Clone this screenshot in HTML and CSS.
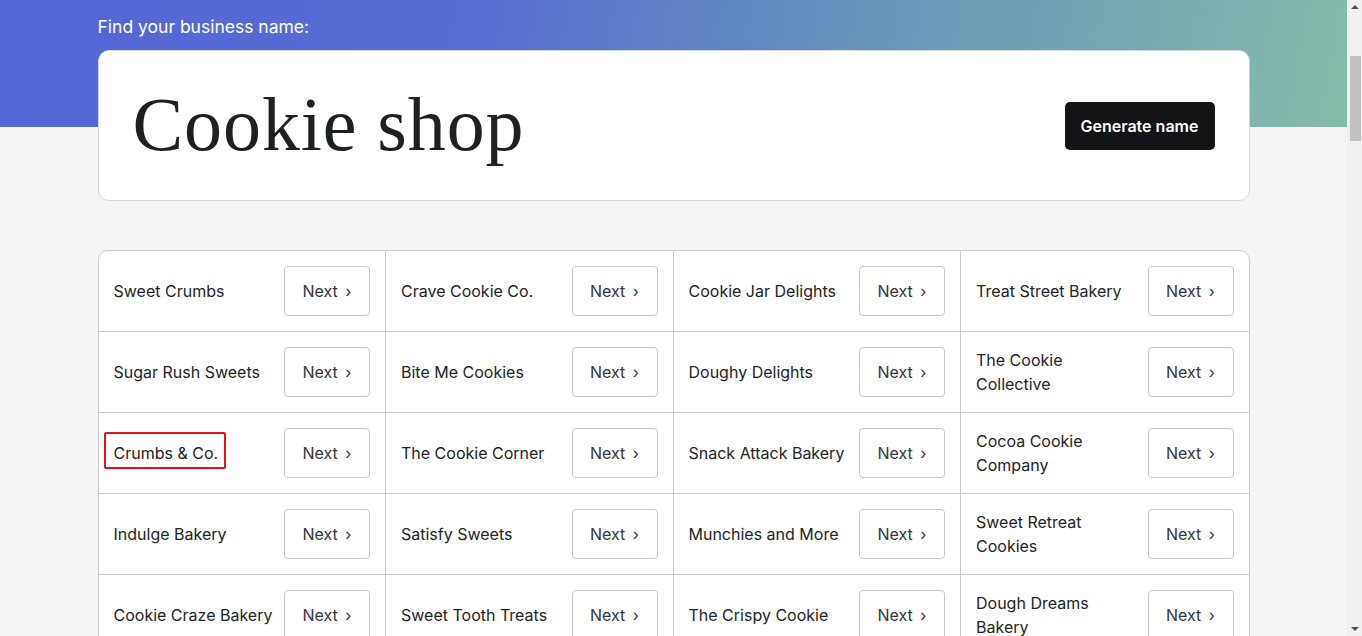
FILE: index.html
```html
<!DOCTYPE html>
<html lang="en">
<head>
<meta charset="utf-8">
<title>Business name generator</title>
<link rel="stylesheet" href="styles.css">
</head>
<body>
<div class="page">
  <section class="hero">
    <div class="container">
      <label class="hero-label">Find your business name:</label>
      <div class="search-card">
        <h1 class="search-title">Cookie shop</h1>
        <button class="generate-btn">Generate name</button>
      </div>
    </div>
  </section>

  <section class="results container">
    <div class="grid">
      <div class="cell"><span class="name">Sweet Crumbs</span><button class="next">Next <span class="chev">›</span></button></div>
      <div class="cell"><span class="name">Crave Cookie Co.</span><button class="next">Next <span class="chev">›</span></button></div>
      <div class="cell"><span class="name">Cookie Jar Delights</span><button class="next">Next <span class="chev">›</span></button></div>
      <div class="cell"><span class="name">Treat Street Bakery</span><button class="next">Next <span class="chev">›</span></button></div>

      <div class="cell"><span class="name">Sugar Rush Sweets</span><button class="next">Next <span class="chev">›</span></button></div>
      <div class="cell"><span class="name">Bite Me Cookies</span><button class="next">Next <span class="chev">›</span></button></div>
      <div class="cell"><span class="name">Doughy Delights</span><button class="next">Next <span class="chev">›</span></button></div>
      <div class="cell"><span class="name">The Cookie Collective</span><button class="next">Next <span class="chev">›</span></button></div>

      <div class="cell"><span class="name highlighted">Crumbs &amp; Co.</span><button class="next">Next <span class="chev">›</span></button></div>
      <div class="cell"><span class="name">The Cookie Corner</span><button class="next">Next <span class="chev">›</span></button></div>
      <div class="cell"><span class="name">Snack Attack Bakery</span><button class="next">Next <span class="chev">›</span></button></div>
      <div class="cell"><span class="name">Cocoa Cookie Company</span><button class="next">Next <span class="chev">›</span></button></div>

      <div class="cell"><span class="name">Indulge Bakery</span><button class="next">Next <span class="chev">›</span></button></div>
      <div class="cell"><span class="name">Satisfy Sweets</span><button class="next">Next <span class="chev">›</span></button></div>
      <div class="cell"><span class="name">Munchies and More</span><button class="next">Next <span class="chev">›</span></button></div>
      <div class="cell"><span class="name">Sweet Retreat Cookies</span><button class="next">Next <span class="chev">›</span></button></div>

      <div class="cell"><span class="name">Cookie Craze Bakery</span><button class="next">Next <span class="chev">›</span></button></div>
      <div class="cell"><span class="name">Sweet Tooth Treats</span><button class="next">Next <span class="chev">›</span></button></div>
      <div class="cell"><span class="name">The Crispy Cookie</span><button class="next">Next <span class="chev">›</span></button></div>
      <div class="cell"><span class="name">Dough Dreams Bakery</span><button class="next">Next <span class="chev">›</span></button></div>

      <div class="cell"><span class="name">Baked Bliss</span><button class="next">Next <span class="chev">›</span></button></div>
      <div class="cell"><span class="name">Chip Happens</span><button class="next">Next <span class="chev">›</span></button></div>
      <div class="cell"><span class="name">Golden Oven</span><button class="next">Next <span class="chev">›</span></button></div>
      <div class="cell"><span class="name">Crumb Culture</span><button class="next">Next <span class="chev">›</span></button></div>
    </div>
  </section>
</div>

<div class="scrollbar" aria-hidden="true">
  <span class="scroll-arrow up"></span>
  <span class="scroll-thumb"></span>
  <span class="scroll-arrow down"></span>
</div>
</body>
</html>
```

FILE: styles.css
```css
body {
  margin: 0;
  background: #f4f5f4;
  font-family: Inter, "Noto Sans", "Liberation Sans", sans-serif;
  color: #222426;
}

.page {
  margin-right: 15px;
  background-image: linear-gradient(100deg, #5366d6 0%, #566fd2 35%, #6a9bb6 70%, #84bcaa 100%);
  background-size: 100% 127px;
  background-repeat: no-repeat;
  padding-bottom: 60px;
}

.container {
  max-width: 1152px;
  margin: 0 auto;
}

.hero {
  padding-top: 15px;
}

.hero-label {
  display: block;
  color: #ffffff;
  font-size: 17.5px;
  line-height: 24px;
  margin-bottom: 11px;
}

.search-card {
  box-sizing: border-box;
  height: 151px;
  background: #ffffff;
  border: 1px solid #d6d8d8;
  border-radius: 11px;
  display: flex;
  align-items: center;
  justify-content: space-between;
  padding: 0 34px 0 34px;
}

.search-title {
  margin: 0;
  font-family: "Liberation Serif", "DejaVu Serif", serif;
  font-weight: 400;
  font-size: 76px;
  line-height: 1;
  color: #1d2023;
  letter-spacing: 0.9px;
  padding-bottom: 4px;
}

.generate-btn {
  background: #121416;
  color: #ffffff;
  border: 0;
  border-radius: 5px;
  width: 150px;
  height: 48px;
  font-family: Inter, "Noto Sans", sans-serif;
  font-size: 16px;
  font-weight: 600;
  cursor: pointer;
}

.results {
  margin-top: 49px;
}

.grid {
  display: grid;
  grid-template-columns: repeat(4, 1fr);
  border: 1px solid #cbcbcb;
  border-radius: 10px;
  background: #ffffff;
  overflow: hidden;
}

.cell {
  box-sizing: border-box;
  height: 81px;
  display: flex;
  align-items: center;
  justify-content: space-between;
  gap: 7px;
  padding: 0 15px 0 15px;
  border-right: 1px solid #cbcbcb;
  border-bottom: 1px solid #cbcbcb;
}

.cell:nth-child(4n) {
  border-right: 0;
}

.name {
  font-size: 16px;
  line-height: 24px;
  color: #222426;
  position: relative;
}

.highlighted::after {
  content: "";
  position: absolute;
  top: -9px;
  bottom: -4px;
  left: -10px;
  right: -8px;
  border: 2px solid #e3121a;
  border-radius: 2px;
}

.next {
  flex: 0 0 auto;
  box-sizing: border-box;
  width: 86px;
  height: 50px;
  background: #ffffff;
  border: 1px solid #c8c8c8;
  border-radius: 4px;
  font-family: Inter, "Noto Sans", sans-serif;
  font-size: 16px;
  color: #33363a;
  cursor: pointer;
  padding: 0;
}

.chev {
  margin-left: 3px;
}

/* fake browser scrollbar */
.scrollbar {
  position: fixed;
  top: 0;
  right: 0;
  bottom: 0;
  width: 15px;
  background: #f1f1f1;
  display: flex;
  flex-direction: column;
  align-items: center;
}

.scroll-arrow {
  width: 0;
  height: 0;
  border-left: 4px solid transparent;
  border-right: 4px solid transparent;
}

.scroll-arrow.up {
  margin-top: 5px;
  border-bottom: 4px solid #505050;
}

.scroll-thumb {
  margin-top: 47px;
  width: 11px;
  margin-left: 2px;
  height: 85px;
  background: #c1c1c1;
}

.scroll-arrow.down {
  margin-top: auto;
  margin-bottom: 5px;
  border-top: 4px solid #505050;
}
```
